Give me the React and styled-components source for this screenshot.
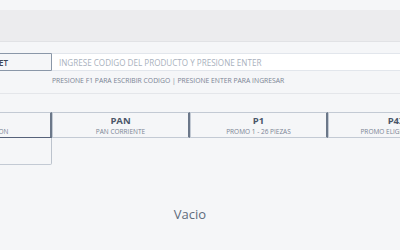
import React from 'react'
import styled, { createGlobalStyle } from 'styled-components'

const Global = createGlobalStyle`
  html, body {
    margin: 0;
    padding: 0;
    background: #f5f6f8;
    font-family: "Open Sans", "Noto Sans", sans-serif;
    overflow: hidden;
  }
`;

const Page = styled.div`
  width: 400px;
  height: 250px;
  overflow: hidden;
  background: #f5f6f8;
  padding-top: 10px;
  box-sizing: border-box;
`;

const HeaderBand = styled.div`
  height: 31px;
  background: #ececee;
  border-bottom: 1px solid #e1e2e5;
`;

const Section = styled.div`
  border-bottom: ${p => (p.divided ? '1px solid #e4e6ea' : 'none')};
  padding: ${p => p.pad || '0'};
`;

const Inner = styled.div`
  width: 552px;
  margin-left: -86px;
`;

const InputRow = styled.div`
  display: flex;
  height: 18px;
`;

const ModeButton = styled.button`
  width: 138px;
  height: 18px;
  box-sizing: border-box;
  border: 1px solid #8a97a8;
  border-radius: 2px 0 0 2px;
  background: #f5f6f8;
  color: #3c4656;
  font-family: inherit;
  font-size: 8px;
  font-weight: 600;
  padding: 0 4px 0 0;
  text-align: center;
`;

const CodeInput = styled.input`
  flex: 1;
  height: 18px;
  box-sizing: border-box;
  border: 1px solid #e2e6ec;
  border-left: none;
  background: #fff;
  padding: 0 7px;
  font-family: inherit;
  font-size: 8.1px;
  outline: none;
  &::placeholder {
    color: #a9b1bd;
  }
`;

const Hint = styled.div`
  margin: 5px 0 0 138px;
  font-size: 6.8px;
  color: #7a8494;
`;

const Grid = styled.div`
  display: grid;
  grid-template-columns: repeat(4, 138px);
`;

const Cell = styled.button`
  height: ${p => (p.tall ? '27px' : '26px')};
  box-sizing: border-box;
  background: #f5f6f8;
  border: 1px solid #c3cad4;
  border-right: 2px solid #6b7789;
  border-bottom-color: ${p => (p.active ? '#56627a' : '#c3cad4')};
  border-radius: 0;
  margin: 0;
  padding: 0;
  display: flex;
  flex-direction: column;
  align-items: center;
  justify-content: center;
  font-family: inherit;
  ${p => p.plain && `
    border-right: 1px solid #bcc3cd;
    border-top: none;
    border-radius: 0 0 2px 2px;
  `}
`;

const CellTitle = styled.span`
  font-size: 9.5px;
  font-weight: 700;
  color: #4a5568;
  line-height: 11px;
  margin-top: 1px;
`;

const CellSub = styled.span`
  font-size: 6.5px;
  color: #7a8494;
  line-height: 9px;
  margin-top: 1px;
`;

const Empty = styled.div`
  height: 48px;
  display: flex;
  align-items: center;
  justify-content: center;
  font-size: 13px;
  color: #5f6b7c;
  padding-top: 25px;
`;

const products = [
  { code: 'SP', name: 'SIN PROMOCION', active: true },
  { code: 'PAN', name: 'PAN CORRIENTE' },
  { code: 'P1', name: 'PROMO 1 - 26 PIEZAS' },
  { code: 'P4X', name: 'PROMO ELIGE 4 PAGA 3' },
];

export default function App() {
  return (
    <>
      <Global />
      <Page>
        <HeaderBand />
        <Section divided pad="11px 0 8px">
          <Inner>
            <InputRow>
              <ModeButton>MODO TICKET</ModeButton>
              <CodeInput placeholder="INGRESE CODIGO DEL PRODUCTO Y PRESIONE ENTER" />
            </InputRow>
            <Hint>PRESIONE F1 PARA ESCRIBIR CODIGO | PRESIONE ENTER PARA INGRESAR</Hint>
          </Inner>
        </Section>
        <Section pad="18px 0 0">
          <Inner>
            <Grid>
              {products.map(p => (
                <Cell key={p.code} active={p.active}>
                  <CellTitle>{p.code}</CellTitle>
                  <CellSub>{p.name}</CellSub>
                </Cell>
              ))}
              <Cell plain tall />
            </Grid>
            <Empty>Vacio</Empty>
          </Inner>
        </Section>
      </Page>
    </>
  )
}
